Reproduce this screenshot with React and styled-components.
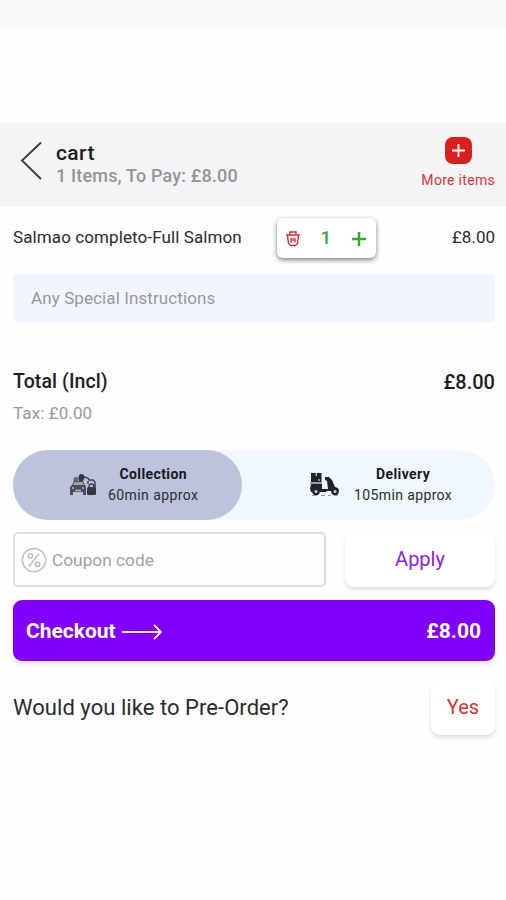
import React from "react";
import styled, { createGlobalStyle } from "styled-components";

const GlobalStyle = createGlobalStyle`
  * { box-sizing: border-box; }
  body { margin: 0; background: #fefefe; font-family: Roboto, "Liberation Sans", sans-serif; }
  button { font-family: inherit; border: 0; padding: 0; cursor: pointer; }
`;

const Screen = styled.main`
  height: 900px;
  display: flex;
  flex-direction: column;
  overflow: hidden;
  color: #202124;
`;

const StatusBar = styled.div`
  height: 30px;
  margin-bottom: 93px;
  flex: none;
  background: #fafafa;
`;

const Text = styled.span`
  display: block;
  white-space: nowrap;
  font-size: ${(p) => p.$size}px;
  line-height: ${(p) => p.$line || 22}px;
  font-weight: ${(p) => p.$weight || 400};
  letter-spacing: ${(p) => p.$spacing || 0}px;
  color: ${(p) => p.$color || "#2b2c2f"};
`;

const Header = styled.header`
  height: 83px;
  flex: none;
  display: flex;
  background: #f2f4f6;
  padding: 0 11px 0 20px;
`;

const BackButton = styled.button`
  width: 36px;
  height: 40px;
  margin-top: 18px;
  background: none;
  text-align: left;
`;

const Heading = styled.div`
  flex: 1;
  padding-top: 19px;
`;

const MoreItems = styled.div`
  display: flex;
  flex-direction: column;
  align-items: center;
  padding-top: 14px;
  gap: 6px;
`;

const PlusTile = styled.span`
  width: 27px;
  height: 27px;
  border-radius: 8px;
  background: #d9201e;
  display: flex;
  align-items: center;
  justify-content: center;
`;

const Content = styled.section`
  padding: 0 11px 0 13px;
`;

const ItemRow = styled.div`
  height: 68px;
  display: grid;
  grid-template-columns: 264px 99px 1fr;
  padding-top: 12px;
`;

const ItemText = styled.div`
  padding-top: 8px;
  justify-self: ${(p) => (p.$end ? "end" : "start")};
`;

const Stepper = styled.div`
  height: 40px;
  border-radius: 6px;
  background: #fff;
  box-shadow: 0 2px 5px rgba(0, 0, 0, 0.5);
  display: grid;
  grid-template-columns: 32px 34px 31px;
  align-items: center;
  justify-items: center;
`;

const Instructions = styled.div`
  height: 48px;
  border-radius: 4px;
  background: #f1f6fe;
  padding: 13px 18px;
`;

const Totals = styled.div`
  height: 128px;
  padding-top: 49px;
  display: flex;
  justify-content: space-between;
`;

const Methods = styled.div`
  height: 70px;
  border-radius: 35px;
  background: #f1f7fe;
  display: grid;
  grid-template-columns: 229px 1fr;
`;

const Method = styled.div`
  display: flex;
  border-radius: 35px;
  background: ${(p) => (p.$active ? "#bcc3da" : "transparent")};
  padding: 14px 0 0 ${(p) => (p.$active ? 54 : 67)}px;
  gap: ${(p) => (p.$active ? 9 : 13)}px;
`;

const MethodIcon = styled.span`
  width: 32px;
  height: 32px;
  margin-top: 5px;
`;

const MethodLabel = styled.div`
  text-align: center;
`;

const CouponRow = styled.div`
  height: 55px;
  margin-top: 12px;
  display: grid;
  grid-template-columns: 313px 150px;
  justify-content: space-between;
`;

const CouponField = styled.div`
  border: 2px solid #dbdddf;
  border-radius: 5px;
  display: flex;
  align-items: center;
  gap: 5px;
  padding-left: 6px;
`;

const RaisedButton = styled.button`
  height: 55px;
  width: ${(p) => p.$width}px;
  border-radius: 9px;
  background: #fff;
  box-shadow: 0 3px 4px rgba(0, 0, 0, 0.12);
  display: flex;
  align-items: center;
  justify-content: center;
  padding-bottom: 2px;
`;

const Checkout = styled.button`
  width: 100%;
  height: 61px;
  margin-top: 13px;
  border-radius: 9px;
  padding: 0 14px 0 13px;
  background: #8000fb;
  box-shadow: 0 3px 5px rgba(0, 0, 0, 0.12);
  display: flex;
  align-items: center;
`;

const CheckoutArrow = styled.span`
  flex: 1;
  height: 18px;
  padding-left: 6px;
  text-align: left;
`;

const PreOrder = styled.div`
  height: 55px;
  margin-top: 19px;
  display: flex;
  align-items: center;
  justify-content: space-between;
`;

const Svg = styled.svg`
  display: block;
  fill: none;
  stroke: ${(p) => p.$color || "currentColor"};
  stroke-width: ${(p) => p.$stroke || 1.5};
`;

const PickupIcon = () => (
  <Svg width="32" height="32" viewBox="0 0 32 32" $color="#3c3f49" $stroke={1.4}>
    <g fill="#343740" stroke="none">
      <circle cx="9" cy="10.5" r="2.6" fill="#656977" />
      <path d="M11.5 9c0-2.5 1-4 3-4s3 1.5 3 4l-2 4h-3z" />
      <path d="M5 16l2-4h9l2 4 1 2v8h-3v-3H6v3H3v-8z" fill="#4a4d58" />
      <rect x="20" y="18" width="9" height="8" rx="1.5" />
    </g>
    <path d="M7.5 13h8l1.500 3H6z" fill="#9da3b6" stroke="none" />
    <path d="M5 19h2m8 0h2M8 21.500h6" stroke="#b5bace" />
    <path d="M17 8l4 1 1 2h4l2 2v7M21 15v-3M22 18c0-4 5-4 5 0" />
  </Svg>
);

const ScooterIcon = () => (
  <Svg width="32" height="32" viewBox="0 0 32 32" $color="#20242a">
    <g fill="#20242a" stroke="none">
      <path d="M2 4h10.500v9H2zM2 15h11v5h6l-1-8-2-1V8h4l3 3 3 7 3 1 1 3H18l-1 1H2l-1-3z" />
      <circle cx="7" cy="22.500" r="3.800" />
      <circle cx="26" cy="22.500" r="3.800" />
    </g>
    <path d="M7.300 4v3M9 11h2" stroke="#adb3ba" />
    <path d="M1 14h12" stroke="#7d838a" />
    <g fill="#cbd1d8" stroke="none">
      <circle cx="7" cy="22.500" r="1.500" />
      <circle cx="26" cy="22.500" r="1.500" />
    </g>
    <path d="M3 26.500h5m4 0h4m3 0h3m3 0h4" stroke="#92979e" strokeWidth="1" />
  </Svg>
);

export default function App() {
  return (
    <Screen>
      <GlobalStyle />
      <StatusBar />
      <Header>
        <BackButton aria-label="Back">
          <Svg width="24" height="40" $color="#38393b" $stroke={1.8}>
            <path d="M21 1.500L2 19.500L21 38" />
          </Svg>
        </BackButton>
        <Heading>
          <Text $size={21} $weight={500} $spacing={0.4} $color="#1c1d1f">cart</Text>
          <Text $size={18} $weight={500} $color="#929497" $spacing={0.17} $line={24}>1 Items, To Pay: £8.00</Text>
        </Heading>
        <MoreItems>
          <PlusTile>
            <Svg width="15" height="15" $color="#fff" $stroke={1.8}>
              <path d="M1 7.500h13M7.500 1v13" />
            </Svg>
          </PlusTile>
          <Text $size={14} $line={20} $color="#dc3434" $spacing={0.3}>More items</Text>
        </MoreItems>
      </Header>
      <Content>
        <ItemRow>
          <ItemText><Text $size={17} $spacing={0.1} $line={23}>Salmao completo-Full Salmon</Text></ItemText>
          <Stepper>
            <Svg width="16" height="18" viewBox="0 0 16 18" $color="#d52e38" $stroke={1.4}>
              <path d="M1 6h14M5 6V3h6v3M2.500 6.500l1 8 2 2h5l2-2 1-8M6 9v4.500M10 9v4.500M8 9v3" />
            </Svg>
            <Text $size={19} $weight={500} $color="#45a638">1</Text>
            <Svg width="16" height="18" $color="#38a52d" $stroke={2.5}>
              <path d="M1 10h14M8 3v14" />
            </Svg>
          </Stepper>
          <ItemText $end><Text $size={17}>£8.00</Text></ItemText>
        </ItemRow>
        <Instructions><Text $size={17} $color="#96999d" $spacing={0.1}>Any Special Instructions</Text></Instructions>
        <Totals>
          <div>
            <Text $size={19.5} $weight={500} $spacing={0.1} $color="#1c1d1f">Total (Incl)</Text>
            <Text $size={17} $color="#96989b" $line={40} $spacing={0.1}>Tax: £0.00</Text>
          </div>
          <Text $size={20} $weight={500} $color="#1c1d1f">£8.00</Text>
        </Totals>
        <Methods>
          <Method $active>
            <MethodIcon><PickupIcon /></MethodIcon>
            <MethodLabel>
              <Text $size={14} $weight={700} $line={21} $spacing={0.4} $color="#17181c">Collection</Text>
              <Text $size={14} $line={21} $spacing={0.42}>60min approx</Text>
            </MethodLabel>
          </Method>
          <Method>
            <MethodIcon><ScooterIcon /></MethodIcon>
            <MethodLabel>
              <Text $size={14} $weight={700} $line={21} $spacing={0.4} $color="#17181c">Delivery</Text>
              <Text $size={14} $line={21} $spacing={0.38}>105min approx</Text>
            </MethodLabel>
          </Method>
        </Methods>
        <CouponRow>
          <CouponField>
            <Svg width="26" height="26" $color="#b5c2c8">
              <circle cx="13" cy="13" r="11.600" />
              <circle cx="9.400" cy="8.800" r="2.200" />
              <circle cx="16.600" cy="17.200" r="2.200" />
              <path d="M18 6.500L8 19.500" />
            </Svg>
            <Text $size={17.3} $color="#a0a1a3">Coupon code</Text>
          </CouponField>
          <RaisedButton $width={150}><Text $size={20} $color="#8620f4">Apply</Text></RaisedButton>
        </CouponRow>
        <Checkout>
          <Text $size={21} $weight={700} $color="#fff">Checkout</Text>
          <CheckoutArrow>
            <Svg width="42" height="18" $color="#f4e9ff" $stroke={1.8}>
              <path d="M0 10h39M32 3l7 7-7 7" />
            </Svg>
          </CheckoutArrow>
          <Text $size={21} $weight={700} $color="#fff">£8.00</Text>
        </Checkout>
        <PreOrder>
          <Text $size={22} $spacing={0.05} $line={26}>Would you like to Pre-Order?</Text>
          <RaisedButton $width={64}><Text $size={20} $color="#d53232">Yes</Text></RaisedButton>
        </PreOrder>
      </Content>
    </Screen>
  );
}
